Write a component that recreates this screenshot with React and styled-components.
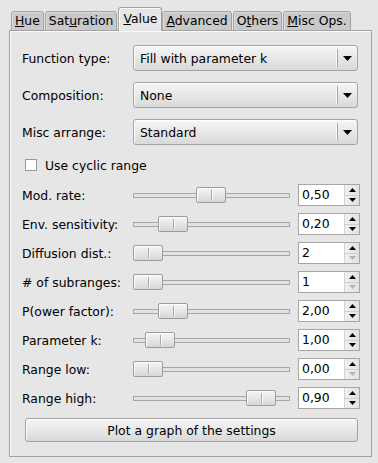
import styled, { createGlobalStyle } from "styled-components";

const GlobalStyle = createGlobalStyle`
  html, body {
    margin: 0;
    padding: 0;
    background: #e6e6e6;
  }
  body {
    font-family: "DejaVu Sans", "Liberation Sans", sans-serif;
    font-size: 12.4px;
    color: #000;
  }
`;

const tabs = [
  { pre: "", key: "H", post: "ue" },
  { pre: "Sat", key: "u", post: "ration" },
  { pre: "", key: "V", post: "alue", active: true },
  { pre: "", key: "A", post: "dvanced" },
  { pre: "O", key: "t", post: "hers" },
  { pre: "", key: "M", post: "isc Ops." },
];

const combos = [
  { label: "Function type:", value: "Fill with parameter k" },
  { label: "Composition:", value: "None" },
  { label: "Misc arrange:", value: "Standard" },
];

const sliders = [
  { label: "Mod. rate:", pos: 63, value: "0,50" },
  { label: "Env. sensitivity:", pos: 25, value: "0,20" },
  { label: "Diffusion dist.:", pos: 0, value: "2", atMin: true },
  { label: "# of subranges:", pos: 0, value: "1", atMin: true },
  { label: "P(ower factor):", pos: 25, value: "2,00" },
  { label: "Parameter k:", pos: 12, value: "1,00" },
  { label: "Range low:", pos: 0, value: "0,00", atMin: true },
  { label: "Range high:", pos: 113, value: "0,90" },
];

export default function App() {
  return (
    <Window>
      <GlobalStyle />
      <TabBar>
        {tabs.map((t, i) => (
          <Tab key={i} $active={t.active}>
            {t.pre}
            <u>{t.key}</u>
            {t.post}
          </Tab>
        ))}
      </TabBar>

      <Panel>
        <ComboList>
          {combos.map((c) => (
            <Row key={c.label}>
              <Label>{c.label}</Label>
              <Combo>
                <ComboText>{c.value}</ComboText>
                <ComboArrow>
                  <svg width="9" height="5" viewBox="0 0 9 5">
                    <path d="M0 0h9L4.5 5z" fill="#000" />
                  </svg>
                </ComboArrow>
              </Combo>
            </Row>
          ))}
        </ComboList>

        <CheckRow>
          <CheckBox />
          <span>Use cyclic range</span>
        </CheckRow>

        <SliderList>
          {sliders.map((s) => (
            <Row key={s.label}>
              <Label>{s.label}</Label>
              <Slider>
                <Groove />
                <Handle style={{ left: s.pos }} />
              </Slider>
              <Spin>
                <SpinValue>{s.value}</SpinValue>
                <SpinButtons>
                  <SpinArrow>
                    <svg width="7" height="4" viewBox="0 0 7 4">
                      <path d="M3.5 0L7 4H0z" fill="#000" />
                    </svg>
                  </SpinArrow>
                  <SpinArrow>
                    <svg width="7" height="4" viewBox="0 0 7 4">
                      <path d="M0 0h7L3.5 4z" fill={s.atMin ? "#b4b4b4" : "#000"} />
                    </svg>
                  </SpinArrow>
                </SpinButtons>
              </Spin>
            </Row>
          ))}
        </SliderList>

        <PlotButton>Plot a graph of the settings</PlotButton>
      </Panel>
    </Window>
  );
}

const Window = styled.div`
  width: 378px;
  height: 463px;
  padding: 7px 0 0 9px;
  box-sizing: border-box;
`;

const TabBar = styled.div`
  display: flex;
  align-items: flex-end;
  height: 24px;
  padding-left: 2px;
  position: relative;
  z-index: 1;
`;

const Tab = styled.div`
  height: ${(p) => (p.$active ? "24px" : "20px")};
  box-sizing: border-box;
  padding: ${(p) => (p.$active ? "3px 4px 0" : "1px 3px 0")};
  border: 1px solid #a2a2a2;
  border-bottom: ${(p) => (p.$active ? "none" : "1px solid #a2a2a2")};
  border-radius: 3px 3px 0 0;
  background: ${(p) => (p.$active ? "#e6e6e6" : "#c9c9c9")};
  box-shadow: ${(p) => (p.$active ? "inset 1px 1px 0 #fbfbfb" : "inset 1px 1px 0 #dcdcdc")};
  margin-right: ${(p) => (p.$active ? "0" : "1px")};
  white-space: nowrap;
  line-height: 16px;
`;

const Panel = styled.div`
  width: 363px;
  height: 427px;
  box-sizing: border-box;
  margin-top: -1px;
  border: 1px solid #a2a2a2;
  box-shadow: inset 1px 1px 0 #fbfbfb;
  padding: 14px 0 0 12px;
  display: flex;
  flex-direction: column;
`;

const ComboList = styled.div`
  display: flex;
  flex-direction: column;
  gap: 11px;
`;

const SliderList = styled.div`
  display: flex;
  flex-direction: column;
  gap: 7px;
  margin-top: 13px;
`;

const Row = styled.div`
  display: flex;
  align-items: center;
`;

const Label = styled.div`
  width: 111px;
  flex: none;
  white-space: nowrap;
`;

const Combo = styled.div`
  width: 225px;
  height: 26px;
  box-sizing: border-box;
  border: 1px solid #a4a4a4;
  border-radius: 3px;
  background: linear-gradient(#f6f6f6, #e6e6e6 55%, #d9d9d9);
  box-shadow: inset 1px 1px 0 #fdfdfd;
  display: flex;
  align-items: center;
`;

const ComboText = styled.div`
  flex: 1;
  padding-left: 6px;
`;

const ComboArrow = styled.div`
  width: 18px;
  height: 18px;
  margin-right: 1px;
  border-left: 1px solid #a8a8a8;
  box-shadow: -1px 0 0 #fafafa;
  display: flex;
  align-items: center;
  justify-content: center;
`;

const CheckRow = styled.div`
  display: flex;
  align-items: center;
  gap: 8px;
  margin: 14px 0 0 3px;
  height: 12px;
`;

const CheckBox = styled.div`
  width: 12px;
  height: 12px;
  box-sizing: border-box;
  border: 1px solid #9a9a9a;
  background: #fff;
`;

const Slider = styled.div`
  position: relative;
  width: 157px;
  height: 16px;
  display: flex;
  align-items: center;
`;

const Groove = styled.div`
  width: 100%;
  height: 5px;
  box-sizing: border-box;
  border: 1px solid #a6a6a6;
  background: #e2e2e2;
`;

const Handle = styled.div`
  position: absolute;
  top: 0;
  width: 30px;
  height: 16px;
  box-sizing: border-box;
  border: 1px solid #9c9c9c;
  border-radius: 2px;
  background: linear-gradient(#f5f5f5, #e3e3e3 60%, #d6d6d6);
  box-shadow: inset 1px 1px 0 #fdfdfd;
  &::after {
    content: "";
    position: absolute;
    left: 14px;
    top: 2px;
    bottom: 2px;
    width: 1px;
    background: #a8a8a8;
    box-shadow: 1px 0 0 #fafafa;
  }
`;

const Spin = styled.div`
  margin-left: 8px;
  width: 62px;
  height: 22px;
  box-sizing: border-box;
  border: 1px solid #a6a6a6;
  background: #fff;
  display: flex;
`;

const SpinValue = styled.div`
  flex: 1;
  padding-left: 3px;
  line-height: 20px;
`;

const SpinButtons = styled.div`
  width: 14px;
  display: flex;
  flex-direction: column;
  border-left: 1px solid #d4d4d4;
  background: linear-gradient(90deg, #f0f0f0, #e2e2e2);
`;

const SpinArrow = styled.div`
  flex: 1;
  display: flex;
  align-items: center;
  justify-content: center;
  & + & {
    border-top: 1px solid #d0d0d0;
  }
`;

const PlotButton = styled.div`
  margin: 9px 0 0 3px;
  width: 333px;
  height: 24px;
  box-sizing: border-box;
  border: 1px solid #a2a2a2;
  border-radius: 3px;
  background: linear-gradient(#f6f6f6, #e6e6e6 55%, #d8d8d8);
  box-shadow: inset 1px 1px 0 #fdfdfd;
  display: flex;
  align-items: center;
  justify-content: center;
`;
